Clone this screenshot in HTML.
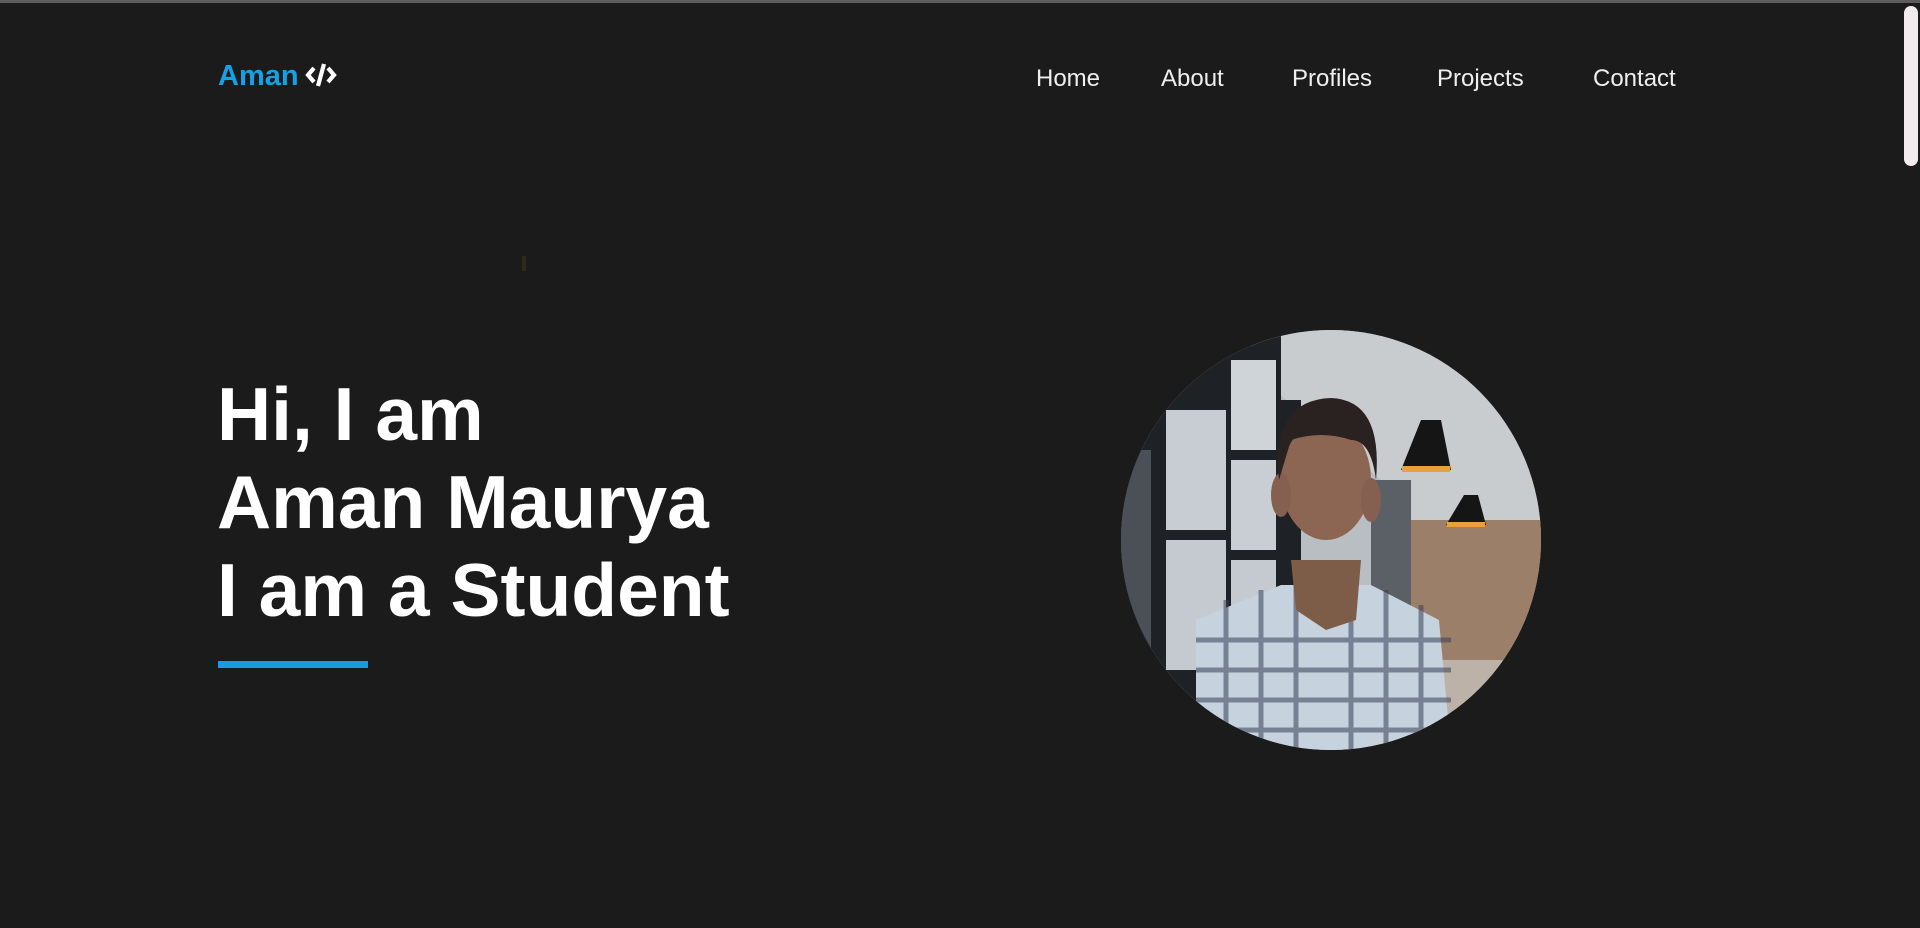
<!DOCTYPE html>
<html><head><meta charset="utf-8"><style>
html,body{margin:0;padding:0}
body{width:1920px;height:928px;background:#1b1b1b;overflow:hidden;position:relative;font-family:"Liberation Sans",sans-serif;}
.top{position:absolute;left:0;top:0;width:1920px;height:3px;background:#5c5c5c}
.sb{position:absolute;left:1904px;top:6px;width:14px;height:160px;background:#f3ecee;border-radius:7px}
.logo{position:absolute;left:218px;top:60px;font-size:29px;font-weight:bold;color:#17a0e6;}
.logo svg{vertical-align:-3px;margin-left:6px}
.nav{position:absolute;top:65px;font-size:24px;color:#efefef;}
h1{position:absolute;left:217px;top:370px;margin:0;font-size:75px;line-height:88px;font-weight:bold;color:#fff;}
.bar{position:absolute;left:218px;top:661px;width:150px;height:7px;background:#1a9ae0}
.mark{position:absolute;left:522px;top:256px;width:4px;height:15px;background:#2e2a18}
.photo{position:absolute;left:1121px;top:330px;width:420px;height:420px;border-radius:50%;overflow:hidden}
</style></head><body>
<div class="top"></div>
<div class="sb"></div>
<div class="logo">Aman<svg width="32" height="26" viewBox="0 0 32 26"><path d="M9 6 L3 13 L9 20 M23 6 L29 13 L23 20" stroke="#fff" stroke-width="4.2" fill="none"/><path d="M19 2 L13 24" stroke="#fff" stroke-width="4.2"/></svg></div>
<div class="nav" style="left:1036px">Home</div>
<div class="nav" style="left:1161px">About</div>
<div class="nav" style="left:1292px">Profiles</div>
<div class="nav" style="left:1437px">Projects</div>
<div class="nav" style="left:1593px">Contact</div>
<div class="mark"></div>
<h1>Hi, I am<br>Aman Maurya<br>I am a Student</h1>
<div class="bar"></div>
<div class="photo"><svg width="420" height="420" viewBox="0 0 420 420">
<rect width="420" height="420" fill="#b9bec3"/>
<polygon points="130,0 420,0 420,200 290,200 260,150 130,40" fill="#c9ccce"/>
<rect x="290" y="190" width="130" height="150" fill="#9b7f69"/>
<rect x="290" y="330" width="130" height="90" fill="#bcb2a8"/>
<rect x="0" y="0" width="160" height="420" fill="#1e2226"/>
<rect x="45" y="80" width="60" height="120" fill="#c7cdd2"/>
<rect x="110" y="30" width="45" height="90" fill="#cfd4d8"/>
<rect x="45" y="210" width="60" height="130" fill="#c4cad0"/>
<rect x="110" y="130" width="45" height="90" fill="#c8ced3"/>
<rect x="110" y="230" width="45" height="100" fill="#c4cad0"/>
<rect x="0" y="120" width="30" height="200" fill="#4a5056"/>
<rect x="160" y="70" width="20" height="250" fill="#1e2226"/>
<rect x="250" y="150" width="40" height="180" fill="#5a6066"/>
<polygon points="300,90 320,90 330,140 280,140" fill="#151515"/>
<rect x="281" y="136" width="48" height="6" fill="#e8a040"/>
<polygon points="343,165 357,165 365,195 325,195" fill="#151515"/>
<rect x="326" y="192" width="38" height="5" fill="#e8a040"/>
<polygon points="75,290 160,255 250,255 318,290 330,420 75,420" fill="#c6d2de"/>
<g stroke="#3a3e58" stroke-width="5" opacity="0.55">
<line x1="75" y1="310" x2="330" y2="310"/><line x1="75" y1="340" x2="330" y2="340"/><line x1="75" y1="370" x2="330" y2="370"/><line x1="75" y1="400" x2="330" y2="400"/>
<line x1="105" y1="270" x2="105" y2="420"/><line x1="140" y1="260" x2="140" y2="420"/><line x1="175" y1="255" x2="175" y2="420"/><line x1="230" y1="255" x2="230" y2="420"/><line x1="265" y1="260" x2="265" y2="420"/><line x1="300" y1="275" x2="300" y2="420"/></g>
<polygon points="170,230 240,230 235,290 205,300 175,280" fill="#7d5c48"/>
<ellipse cx="205" cy="150" rx="45" ry="60" fill="#8c6652"/>
<ellipse cx="160" cy="165" rx="10" ry="22" fill="#856050"/>
<ellipse cx="250" cy="170" rx="10" ry="22" fill="#856050"/>
<path d="M158 150 Q150 70 210 68 Q262 70 255 150 Q250 110 230 110 Q200 100 170 110 Z" fill="#2a2220"/>
</svg></div>
</body></html>
